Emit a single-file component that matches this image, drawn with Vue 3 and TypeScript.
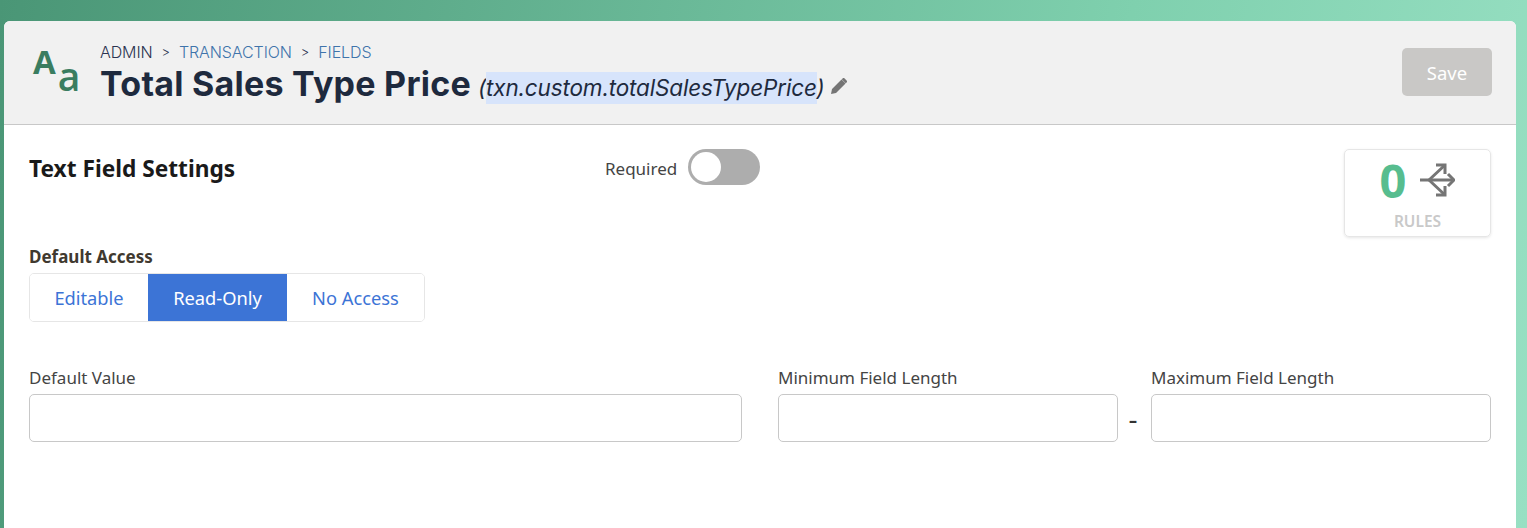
<script setup lang="ts">
import { ref } from 'vue'

const required = ref(false)
const access = ref('Read-Only')
const accessOptions = ['Editable', 'Read-Only', 'No Access']
</script>

<template>
  <div class="page">
    <div class="card">
      <header class="head">
        <div class="type-icon"><span class="big">A</span><span class="small">a</span></div>
        <div class="titles">
          <nav class="crumbs">
            <span class="crumb-first">ADMIN</span>
            <span class="sep">&gt;</span>
            <span class="crumb">TRANSACTION</span>
            <span class="sep">&gt;</span>
            <span class="crumb">FIELDS</span>
          </nav>
          <div class="title-row">
            <h1>Total Sales Type Price</h1>
            <span class="api">(<span class="selected">txn.custom.totalSalesTypePrice</span>)</span>
            <svg class="pencil" viewBox="0 0 18 18" width="18" height="18">
              <path d="M1 17l1-5L11.5 2.5l4 4L6 16zM12.6 1.4c.6-.6 1.4-.6 2 0l2 2c.6.6.6 1.4 0 2l-.9.9-4-4z" fill="#757575" />
            </svg>
          </div>
        </div>
        <button class="save" disabled>Save</button>
      </header>

      <section class="body">
        <div class="top-row">
          <h2>Text Field Settings</h2>
          <div class="required">
            <span>Required</span>
            <button class="toggle" :class="{ on: required }" @click="required = !required"><i></i></button>
          </div>
          <div class="rules">
            <div class="rules-top">
              <span class="count">0</span>
              <svg viewBox="0 0 36 36" width="36" height="36" fill="none" stroke="#757575" stroke-width="3">
                <path d="M1 18h33" />
                <path d="M29 12l6 6-6 6" />
                <path d="M10 18L26 3M10 18l16 15" />
                <path d="M17 3h9v9M17 33h9v-9" />
              </svg>
            </div>
            <div class="rules-label">RULES</div>
          </div>
        </div>

        <div class="access">
          <div class="access-label">Default Access</div>
          <div class="seg">
            <button
              v-for="o in accessOptions"
              :key="o"
              :class="{ active: access === o }"
              @click="access = o"
            >{{ o }}</button>
          </div>
        </div>

        <div class="fields">
          <label class="field f-default">
            <span>Default Value</span>
            <input type="text" />
          </label>
          <label class="field f-len">
            <span>Minimum Field Length</span>
            <input type="text" />
          </label>
          <div class="dash">-</div>
          <label class="field f-len-max">
            <span>Maximum Field Length</span>
            <input type="text" />
          </label>
        </div>
      </section>
    </div>
  </div>
</template>

<style>
html, body {
  margin: 0;
  height: 100%;
  overflow: hidden;
}
</style>

<style scoped>
.page {
  height: 528px;
  box-sizing: border-box;
  padding: 21px 11px 0 4px;
  background: linear-gradient(100deg, #4a9676 0%, #7fd0ae 70%, #98e0c3 100%);
  font-family: "Noto Sans", sans-serif;
  overflow: hidden;
}

.card {
  height: 507px;
  background: #fff;
  border-radius: 6px 6px 0 0;
}

.head {
  height: 104px;
  box-sizing: border-box;
  display: flex;
  align-items: flex-start;
  padding: 22px 24px 0 29px;
  background: #f1f1f1;
  border-bottom: 1px solid #c8c8c8;
  border-radius: 6px 6px 0 0;
}

.type-icon {
  width: 67px;
  height: 60px;
  flex: none;
  color: #3a7d60;
  font-family: "Open Sans", sans-serif;
  display: flex;
  align-items: flex-start;
}

.big {
  font-size: 33px;
  line-height: 44px;
  font-weight: 700;
  margin-top: -3px;
}

.small {
  font-size: 39px;
  line-height: 44px;
  font-weight: 600;
  margin-top: 11px;
  margin-left: 2px;
}

.titles {
  flex: 1;
  min-width: 0;
}

.crumbs {
  display: flex;
  gap: 9px;
  font-family: "Inter", sans-serif;
  font-size: 16px;
  font-weight: 300;
  line-height: 18px;
  letter-spacing: -0.1px;
  margin-bottom: 3px;
  color: #3f74ab;
}

.crumb-first {
  color: #2b3350;
}

.sep {
  color: #2b3350;
  font-size: 13px;
}

.title-row {
  display: flex;
  align-items: center;
  gap: 7px;
  height: 40px;
}

h1 {
  margin: 0;
  font-family: "Inter", sans-serif;
  font-size: 34px;
  line-height: 40px;
  font-weight: 700;
  letter-spacing: 0.25px;
  color: #1e2a3e;
  white-space: nowrap;
}

.api {
  margin-top: 6px;
  font-family: "Inter", sans-serif;
  font-style: italic;
  font-size: 22.5px;
  letter-spacing: -0.15px;
  color: #1e2a3e;
  white-space: nowrap;
}

.selected {
  padding: 2px 0 3px;
  background: #d7e4fb;
}

.pencil {
  flex: none;
  margin-top: 4px;
  margin-left: -2px;
}

.save {
  width: 90px;
  height: 48px;
  margin-top: 5px;
  padding: 0;
  border: none;
  border-radius: 5px;
  background: #c9c8c6;
  color: #fff;
  font-family: inherit;
  font-size: 18.5px;
}

.body {
  padding: 24px 25px 0;
}

.top-row {
  display: flex;
  align-items: flex-start;
  height: 88px;
}

h2 {
  width: 576px;
  margin: 0;
  padding-top: 4px;
  font-size: 22.7px;
  line-height: 32px;
  font-weight: 700;
  color: #1a1a1a;
  flex: none;
}

.required {
  display: flex;
  align-items: center;
  gap: 11px;
  height: 36px;
  font-size: 17px;
  color: #444;
}

.required span {
  margin-top: 2px;
}

.toggle {
  position: relative;
  width: 72px;
  height: 36px;
  padding: 0;
  border: none;
  border-radius: 18px;
  background: #adadad;
}

.toggle i {
  position: absolute;
  top: 3px;
  left: 3px;
  width: 30px;
  height: 30px;
  border-radius: 50%;
  background: #fff;
}

.toggle.on {
  background: #57bd8f;
}

.toggle.on i {
  left: 39px;
}

.rules {
  margin-left: auto;
  width: 147px;
  height: 88px;
  box-sizing: border-box;
  border: 1px solid #e6e6e6;
  border-radius: 5px;
  box-shadow: 0 1px 3px rgba(0, 0, 0, 0.1);
  text-align: center;
}

.rules-top {
  display: flex;
  align-items: center;
  justify-content: center;
  gap: 13px;
  height: 60px;
}

.count {
  font-size: 47px;
  line-height: 58px;
  font-weight: 700;
  color: #57bd8f;
}

.rules-label {
  font-size: 15.5px;
  line-height: 22px;
  font-weight: 600;
  color: #c9c9c9;
}

.access {
  margin-top: 8px;
}

.access-label {
  font-size: 17px;
  line-height: 24px;
  font-weight: 700;
  color: #40392f;
}

.seg {
  display: grid;
  grid-template-columns: 118px 139px 1fr;
  width: 396px;
  margin-top: 4px;
  height: 49px;
  box-sizing: border-box;
  border: 1px solid #e6e6e6;
  border-radius: 5px;
  overflow: hidden;
}

.seg button {
  border: none;
  background: #fff;
  color: #3c74d6;
  font-family: inherit;
  font-size: 18.3px;
  padding: 0;
}

.seg button.active {
  background: #3c74d6;
  color: #fff;
}

.fields {
  display: flex;
  align-items: flex-end;
  margin-top: 44px;
}

.field {
  display: flex;
  flex-direction: column;
  font-size: 17px;
  color: #444;
}

.field span {
  line-height: 24px;
  margin-bottom: 4px;
}

.field input {
  height: 48px;
  box-sizing: border-box;
  width: 100%;
  border: 1px solid #c8c8c8;
  border-radius: 5px;
  background: #fff;
  outline: none;
}

.f-default {
  width: 713px;
  margin-right: 36px;
}

.f-len {
  width: 340px;
}

.f-len-max {
  width: 340px;
}

.dash {
  width: 30px;
  margin-right: 3px;
  height: 48px;
  text-align: center;
  font-size: 28px;
  line-height: 48px;
  color: #333;
}
</style>
